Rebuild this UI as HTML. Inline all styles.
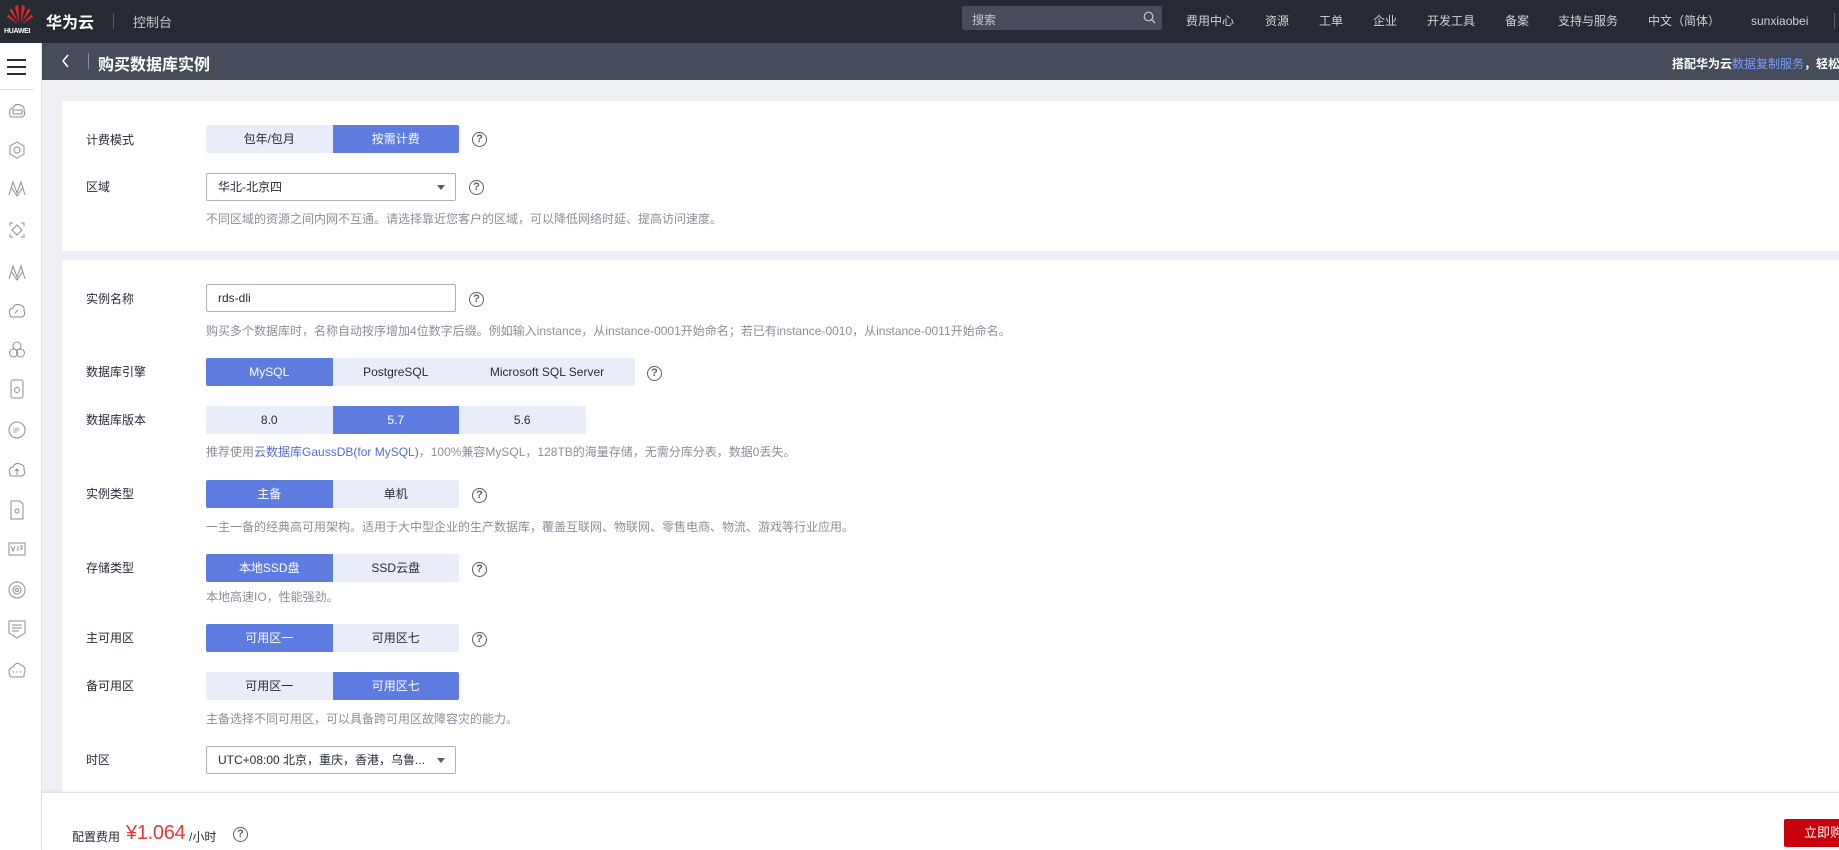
<!DOCTYPE html>
<html><head><meta charset="utf-8">
<style>
*{margin:0;padding:0;box-sizing:border-box}
body{width:1839px;height:850px;overflow:hidden;background:#eef0f5;font-family:"Liberation Sans","Noto Sans CJK SC",sans-serif;font-size:12px;color:#252b3a;position:relative}
.abs{position:absolute}
#top{left:0;top:0;width:1839px;height:43px;background:#262a33}
#hdr{left:42px;top:43px;width:1797px;height:37px;background:#464c59}
#side{left:0;top:43px;width:42px;height:807px;background:#fff;border-right:1px solid #dfe1e6}
.card{background:#fff;left:62px;width:1777px}
.lbl{left:86px;font-size:12px;color:#252b3a;line-height:16px}
.seg{display:flex;height:28px}
.seg div{width:126.5px;height:28px;line-height:28px;text-align:center;background:#e9edfa;color:#252b3a;font-size:12px}
.seg div.on{background:#5e7ce0;color:#fff}
.seg div:first-child{border-radius:2px 0 0 2px}
.seg div:last-child{border-radius:0 2px 2px 0}
.hint{left:206px;color:#8a8e99;font-size:12px;line-height:16px;white-space:nowrap}
.q{width:15px;height:15px;border:1.3px solid #575d6c;border-radius:50%;font-size:11px;line-height:12px;text-align:center;color:#575d6c;font-weight:bold}
.inp{left:206px;width:250px;height:28px;border:1px solid #adb0b8;border-radius:2px;background:#fff;line-height:26px;padding-left:11px;font-size:12px;color:#252b3a}
.arr{position:absolute;right:10px;top:11px;width:0;height:0;border-left:4.5px solid transparent;border-right:4.5px solid transparent;border-top:5px solid #575d6c}
.nav{top:13px;color:#d0d3db;font-size:12px;line-height:16px;white-space:nowrap}
</style></head><body>
<div id="top" class="abs"></div>
<svg class="abs" style="left:6px;top:3px" width="28" height="24" viewBox="0 0 28 24">
<g fill="#e0232a">
<path d="M13 20 L9 4 Q11 1 12.5 3 Z"/><path d="M15 20 L19 4 Q17 1 15.5 3 Z"/>
<path d="M12.5 20 L4 8 Q4 5 6 6 Z"/><path d="M15.5 20 L24 8 Q24 5 22 6 Z"/>
<path d="M12 21 L1 14 Q1 12 3 12 Z"/><path d="M16 21 L27 14 Q27 12 25 12 Z"/>
</g></svg>
<div class="abs" style="left:4px;top:28px;font-size:7px;color:#fff;font-weight:bold;letter-spacing:-0.3px">HUAWEI</div>
<div class="abs" style="left:46px;top:9px;font-size:16px;font-weight:bold;color:#fff">华为云</div>
<div class="abs" style="left:113px;top:13px;width:1px;height:16px;background:#555b66"></div>
<div class="abs" style="left:133px;top:12px;font-size:13px;color:#c5c8d0">控制台</div>
<div class="abs" style="left:962px;top:6px;width:200px;height:24px;background:#464c59;border-radius:2px"></div>
<div class="abs" style="left:972px;top:11px;color:#c5c8d0;font-size:12px">搜索</div>
<svg class="abs" style="left:1143px;top:11px" width="13" height="13" viewBox="0 0 13 13"><circle cx="5.5" cy="5.5" r="4.3" stroke="#c5c8d0" stroke-width="1.2" fill="none"/><path d="M8.6 8.6 L12 12" stroke="#c5c8d0" stroke-width="1.3"/></svg>
<div class="abs nav" style="left:1186px">费用中心</div>
<div class="abs nav" style="left:1265px">资源</div>
<div class="abs nav" style="left:1319px">工单</div>
<div class="abs nav" style="left:1373px">企业</div>
<div class="abs nav" style="left:1427px">开发工具</div>
<div class="abs nav" style="left:1505px">备案</div>
<div class="abs nav" style="left:1558px">支持与服务</div>
<div class="abs nav" style="left:1648px">中文（简体）</div>
<div class="abs nav" style="left:1751px">sunxiaobei</div>
<div class="abs" style="left:1834px;top:13px;width:1px;height:16px;background:#555b66"></div>

<div id="hdr" class="abs"></div>
<svg class="abs" style="left:61px;top:54px" width="10" height="14" viewBox="0 0 10 14"><path d="M7 1 L2 7 L7 13" stroke="#fff" stroke-width="1.5" fill="none"/></svg>
<div class="abs" style="left:88px;top:53px;width:1px;height:16px;background:#8a8e99"></div>
<div class="abs" style="left:98px;top:51px;font-size:16px;font-weight:bold;color:#fff">购买数据库实例</div>
<div class="abs" style="left:1672px;top:55px;font-size:12px;font-weight:bold;color:#fff;white-space:nowrap">搭配华为云<span style="color:#7b9cff;font-weight:normal">数据复制服务</span>，轻松迁移</div>

<div id="side" class="abs"></div>
<div class="abs" style="left:7px;top:59px;width:19px;height:2px;background:#252b3a"></div>
<div class="abs" style="left:7px;top:66px;width:19px;height:2px;background:#252b3a"></div>
<div class="abs" style="left:7px;top:73px;width:19px;height:2px;background:#252b3a"></div>
<div class="abs" style="left:0;top:89px;width:34px;height:1px;background:#dfe1e6"></div>
<svg class="abs" style="left:7px;top:0" width="22" height="700" viewBox="0 0 22 700" fill="none" stroke="#8a8e99" stroke-width="1">
<g transform="translate(0,101)"><path d="M3 14 Q1 8 6 7 Q8 2 13 4 Q18 5 17 10 Q19 14 15 16 L5 16 Q3 16 3 14Z"/><rect x="6" y="9" width="9" height="4"/></g>
<g transform="translate(0,140)"><path d="M10 2 L17 6 L17 14 L10 18 L3 14 L3 6 Z"/><circle cx="10" cy="10" r="3"/></g>
<g transform="translate(0,178)"><path d="M2 17 L6 4 L10 15 L14 4 L18 17 M4 9 L10 18 L16 9"/></g>
<g transform="translate(0,220)"><path d="M3 6 V3 H6 M14 3 H17 V6 M17 14 V17 H14 M6 17 H3 V14"/><path d="M10 5 L15 10 L10 15 L5 10Z"/></g>
<g transform="translate(0,262)"><path d="M2 17 L6 4 L10 15 L14 4 L18 17 M4 9 L10 18 L16 9"/></g>
<g transform="translate(0,301)"><path d="M3 14 Q1 8 6 7 Q8 2 13 4 Q18 5 17 10 Q19 14 15 16 L5 16 Q3 16 3 14Z"/><path d="M8 12 L11 9"/></g>
<g transform="translate(0,340)"><circle cx="6.5" cy="13" r="4"/><circle cx="13.5" cy="13" r="4"/><circle cx="10" cy="6" r="4"/></g>
<g transform="translate(0,379)"><rect x="4" y="1" width="12" height="18" rx="2"/><circle cx="10" cy="11" r="2.5"/></g>
<g transform="translate(0,420)"><circle cx="10" cy="10" r="8"/><text x="6" y="13" font-size="7" fill="#8a8e99" stroke="none" font-family="Liberation Sans">IP</text></g>
<g transform="translate(0,460)"><path d="M3 14 Q1 8 6 7 Q8 2 13 4 Q18 5 17 10 Q19 14 15 16 L5 16 Q3 16 3 14Z M10 9 L10 15 M8 11 L10 9 L12 11"/></g>
<g transform="translate(0,500)"><path d="M4 1 L13 1 L16 4 L16 19 L4 19Z"/><circle cx="10" cy="11" r="2"/></g>
<g transform="translate(0,539)"><path d="M2 4 H18 V16 H2Z M4 7 L6 12 L8 7 M11 7 V12 M13 7 H15 V10 H13"/></g>
<g transform="translate(0,580)"><circle cx="10" cy="10" r="8"/><circle cx="10" cy="10" r="4"/><circle cx="10" cy="10" r="1.5"/><path d="M10 1 V2"/></g>
<g transform="translate(0,619)"><path d="M2 2 H18 V14 L10 19 L2 14Z M5 6 H15 M5 9 H15 M5 12 H12"/></g>
<g transform="translate(0,660)"><path d="M3 16 Q0 9 6 7 Q9 1 14 5 Q20 7 17 14 Q18 17 15 17 L5 17 Q3 17 3 16Z"/><path d="M6 12 h1 M9.5 12 h1 M13 12 h1" stroke-width="1.6"/></g>
</svg>

<div class="abs card" style="top:101px;height:150px"></div>
<div class="abs lbl" style="top:132px">计费模式</div>
<div class="abs seg" style="left:206px;top:125px"><div>包年/包月</div><div class="on">按需计费</div></div>
<div class="abs q" style="left:472px;top:132px">?</div>
<div class="abs lbl" style="top:179px">区域</div>
<div class="abs inp" style="top:173px">华北-北京四<span class="arr"></span></div>
<div class="abs q" style="left:469px;top:180px">?</div>
<div class="abs hint" style="top:211px">不同区域的资源之间内网不互通。请选择靠近您客户的区域，可以降低网络时延、提高访问速度。</div>

<div class="abs card" style="top:260px;height:532px"></div>
<div class="abs lbl" style="top:291px">实例名称</div>
<div class="abs inp" style="top:284px">rds-dli</div>
<div class="abs q" style="left:469px;top:292px">?</div>
<div class="abs hint" style="top:323px">购买多个数据库时，名称自动按序增加4位数字后缀。例如输入instance，从instance-0001开始命名；若已有instance-0010，从instance-0011开始命名。</div>

<div class="abs lbl" style="top:364px">数据库引擎</div>
<div class="abs seg" style="left:206px;top:358px"><div class="on">MySQL</div><div>PostgreSQL</div><div style="width:176px">Microsoft SQL Server</div></div>
<div class="abs q" style="left:647px;top:366px">?</div>

<div class="abs lbl" style="top:412px">数据库版本</div>
<div class="abs seg" style="left:206px;top:406px"><div>8.0</div><div class="on">5.7</div><div>5.6</div></div>
<div class="abs hint" style="top:444px">推荐使用<span style="color:#526ecc">云数据库GaussDB(for MySQL)</span>，100%兼容MySQL，128TB的海量存储，无需分库分表，数据0丢失。</div>

<div class="abs lbl" style="top:486px">实例类型</div>
<div class="abs seg" style="left:206px;top:480px"><div class="on">主备</div><div>单机</div></div>
<div class="abs q" style="left:472px;top:488px">?</div>
<div class="abs hint" style="top:519px">一主一备的经典高可用架构。适用于大中型企业的生产数据库，覆盖互联网、物联网、零售电商、物流、游戏等行业应用。</div>

<div class="abs lbl" style="top:560px">存储类型</div>
<div class="abs seg" style="left:206px;top:554px"><div class="on">本地SSD盘</div><div>SSD云盘</div></div>
<div class="abs q" style="left:472px;top:562px">?</div>
<div class="abs hint" style="top:589px">本地高速IO，性能强劲。</div>

<div class="abs lbl" style="top:630px">主可用区</div>
<div class="abs seg" style="left:206px;top:624px"><div class="on">可用区一</div><div>可用区七</div></div>
<div class="abs q" style="left:472px;top:632px">?</div>

<div class="abs lbl" style="top:678px">备可用区</div>
<div class="abs seg" style="left:206px;top:672px"><div>可用区一</div><div class="on">可用区七</div></div>
<div class="abs hint" style="top:711px">主备选择不同可用区，可以具备跨可用区故障容灾的能力。</div>

<div class="abs lbl" style="top:752px">时区</div>
<div class="abs inp" style="top:746px">UTC+08:00 北京，重庆，香港，乌鲁...<span class="arr"></span></div>

<div class="abs" style="left:42px;top:792px;width:1797px;height:58px;background:#fff;border-top:1px solid #dfe1e6;box-shadow:0 -1px 3px rgba(0,0,0,0.06)"></div>
<div class="abs" style="left:72px;top:828px;font-size:12px;color:#252b3a">配置费用</div>
<div class="abs" style="left:126px;top:822px;font-size:20px;color:#e53935;line-height:22px;letter-spacing:-0.3px">¥1.064</div>
<div class="abs" style="left:189px;top:828px;font-size:12px;color:#252b3a">/小时</div>
<div class="abs q" style="left:233px;top:827px">?</div>
<div class="abs" style="left:1784px;top:819px;width:60px;height:28px;background:#c7000b;border-radius:2px;color:#fff;font-size:13px;line-height:28px;padding-left:20px;white-space:nowrap;overflow:hidden">立即购买</div>
</body></html>
